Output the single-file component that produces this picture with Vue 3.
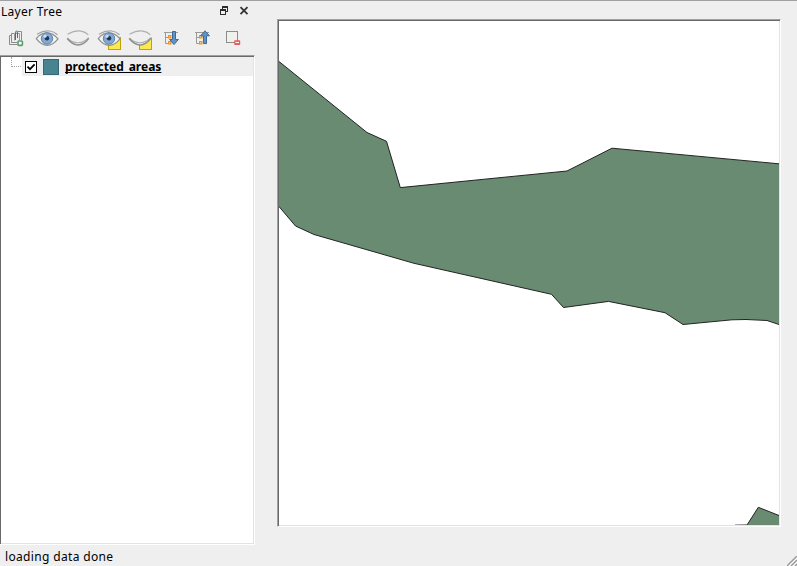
<script setup>
import { ref } from 'vue'

const tools = ['add-group', 'eye', 'closed', 'eye-note', 'closed-note', 'expand', 'collapse', 'remove']
const layers = ref([{ name: 'protected_areas', visible: true }])
const status = ref('loading data done')
</script>

<template>
  <div class="window">
    <main class="body">
      <section class="dock">
        <header class="dock-title">
          <span class="title">Layer Tree</span>
          <svg class="title-icon" width="10" height="10" viewBox="0 0 10 10" shape-rendering="crispEdges">
            <path d="M3 0H9V6H7V5H8V2H4V3H3Z M1 3H7V9H1Z M2 5V8H6V5Z" fill="#2c2c2c" fill-rule="evenodd" />
          </svg>
          <svg class="title-icon" width="10" height="10" viewBox="0 0 10 10">
            <path d="M1.5 1.2L8.5 8.2M8.5 1.2L1.5 8.2" stroke="#333" stroke-width="1.8" />
          </svg>
        </header>

        <div class="toolbar">
          <svg v-for="tool in tools" :key="tool" width="24" height="24" viewBox="0 0 24 24" fill="none">
            <g v-if="tool === 'add-group'">
              <path d="M8 9.5H5.5V18.5H13M10 7.5H7.5V16.5H13M13.5 5.5H17.5V14" stroke="#8a8c89" />
              <path d="M10.5 14.5V7.5H15.5V14" stroke="#9a9c99" />
              <path d="M11.5 14V7Q12.5 2.5 13.5 7V12" stroke="#4b6e80" />
              <rect x="14" y="15" width="4.4" height="4.4" rx=".8" fill="#fff" stroke="#5b9a6c" stroke-width="1.6" />
            </g>

            <g v-else-if="tool.startsWith('eye')">
              <rect v-if="tool === 'eye-note'" x="11.5" y="11.5" width="12" height="12" fill="#fce94f" stroke="#c4a000" />
              <path d="M1.3 12.6Q5.5 6.8 12 6.8Q18 6.8 23 12.8Q18 19.2 12.3 19.3Q6 19 1.3 12.6Z" fill="#f4f4f1" stroke="#8f9290" stroke-width="1.3" />
              <path d="M2 8.3Q8.5 4.4 14.5 5Q19 5.4 22.5 8.8" stroke="#a3a5a4" stroke-width="1.2" />
              <circle cx="12" cy="12.5" r="5.7" fill="#84a8d4" stroke="#5b80b0" />
              <circle cx="12" cy="12.2" r="2.2" fill="#22334a" />
              <circle cx="10" cy="10.2" r="1.6" fill="#c9dcf2" />
            </g>

            <g v-else-if="tool.startsWith('closed')">
              <template v-if="tool === 'closed-note'">
                <rect x="11.5" y="11.5" width="12" height="12" fill="#fce94f" stroke="#c4a000" />
                <path d="M10.5 10.5H24V11.5H23L19 17L12 19H10.5Z" fill="#efefef" />
              </template>
              <path d="M1.5 8.2Q9 4.2 15 5.1Q19.5 5.7 22.3 8.8" stroke="#adafae" stroke-width="1.2" />
              <path d="M1.3 12Q6 16.6 12 16.8Q18.5 16.6 22.7 11.7" stroke="#b0b2b1" stroke-width="1.1" />
              <path d="M1.3 12.5Q6.5 18.9 12 19Q18 18.8 22.7 12.4" stroke="#8f9190" stroke-width="1.6" />
            </g>

            <g v-else-if="tool === 'expand' || tool === 'collapse'">
              <path d="M5 6.5H19M6.5 7V17.5H9M7 11.5H9" stroke="#999b98" />
              <rect x="9.6" y="9.6" width="2.3" height="2.3" fill="#ffe6bd" stroke="#f5901c" stroke-width="1.2" />
              <rect x="9.6" y="15.6" width="2.3" height="2.3" fill="#ffe6bd" stroke="#f5901c" stroke-width="1.2" />
              <path v-if="tool === 'expand'" d="M13.5 5.5H16.5V13.5H19.4L15 18.6L10.6 13.5H13.5Z" fill="#6093c8" stroke="#3f6a98" stroke-width="1" />
              <path v-else d="M13.5 17.6H16.5V9.8H19.4L15 4.8L10.6 9.8H13.5Z" fill="#6093c8" stroke="#3f6a98" stroke-width="1" />
            </g>

            <g v-else>
              <rect x="5.5" y="5.5" width="11" height="11" fill="#f0f0ed" stroke="#8b8d8a" />
              <rect x="13.2" y="14.3" width="6" height="4.7" rx=".8" fill="#ef5656" />
              <path d="M14.5 16.5H18" stroke="#fff" stroke-width="1.2" />
            </g>
          </svg>
        </div>

        <div class="tree">
          <div v-for="layer in layers" :key="layer.name" class="layer">
            <span class="branch"></span>
            <div class="layer-item">
              <span class="check">
                <svg v-if="layer.visible" width="10" height="10" viewBox="0 0 10 10">
                  <path d="M1.5 4.6L4 7.2L8.6 2.4" fill="none" stroke="#000" stroke-width="1.7" />
                </svg>
              </span>
              <span class="swatch"></span>
              <span class="name">{{ layer.name }}</span>
            </div>
          </div>
        </div>
      </section>

      <section class="map">
        <svg width="500" height="504" viewBox="279 21 500 504">
          <g fill="#688b71" stroke="#232323" stroke-width="1">
            <path d="M270 54L279 61.5L367 132.5L386.5 141.3L400.3 187.6L567 171L612 148.2L779 163.8L790 165V328L779 324.5L767 320.5L746 319.5L732 319.8L683 324.5L665 312.7L608.5 301.4L563.5 307.5L551.5 294.3L414 263.3L314 234.5L295.5 226L279 206.5L270 196Z" />
            <path d="M747 525L758.3 507.3L779 515.5L790 520V535H740Z" />
            <path d="M735 524.9L747 524.5" stroke="#8a8a8a" />
          </g>
        </svg>
      </section>
    </main>

    <footer class="status">
      <span class="message">{{ status }}</span>
      <svg class="grip" width="10" height="10" viewBox="0 0 10 10">
        <path d="M0 10L10 0M4 10L10 4M8 10L10 8" stroke="#999" stroke-width="1.4" />
        <path d="M2 10L10 2M6 10L10 6" stroke="#fff" stroke-width="1" />
      </svg>
    </footer>
  </div>
</template>

<style>
body {
  margin: 0;
  background: #efefef;
}
</style>

<style scoped>
.window {
  box-sizing: border-box;
  width: 797px;
  height: 566px;
  display: flex;
  flex-direction: column;
  overflow: hidden;
  border-top: 1px solid #a0a0a0;
  background: #efefef;
  color: #000;
  font: 12px/16px "Noto Sans", "Open Sans", sans-serif;
}
.body {
  display: flex;
  height: 544px;
  gap: 22px;
}
.dock {
  display: flex;
  flex-direction: column;
  width: 255px;
}
.dock-title {
  display: flex;
  align-items: center;
  height: 20px;
  padding: 1px 6px 0 1px;
  box-sizing: border-box;
  gap: 10px;
}
.title {
  flex: 1;
  letter-spacing: 0.3px;
}
.title-icon {
  margin-bottom: 1px;
}
.toolbar {
  display: flex;
  gap: 7px;
  height: 29px;
  padding: 5px 0 0 4px;
}
.tree {
  flex: 1;
  box-sizing: border-box;
  border: solid;
  border-width: 1px 1px 1px 0;
  border-color: #a0a0a0 #fff #fff;
  box-shadow: inset 1px 1px #696969, inset -1px -1px #e3e3e3;
  background: #fff;
  padding: 1px 1px 1px 1px;
}
.layer {
  display: flex;
  height: 19px;
}
.branch {
  width: 9px;
  height: 9px;
  margin: 0 1px 0 10px;
  border-left: 1px dotted #a0a0a0;
  border-bottom: 1px dotted #a0a0a0;
}
.layer-item {
  flex: 1;
  display: flex;
  align-items: center;
  background: #efefef;
  padding-left: 3px;
}
.check {
  box-sizing: border-box;
  display: grid;
  place-items: center;
  width: 12px;
  height: 12px;
  border: 1px solid #000;
  background: #fff;
}
.swatch {
  box-sizing: border-box;
  width: 16px;
  height: 16px;
  margin: 0 6px 0 6px;
  border: 1px solid #35697a;
  background: #488391;
}
.name {
  font-weight: 700;
  text-decoration: underline;
  text-decoration-skip-ink: none;
}
.map {
  box-sizing: border-box;
  width: 504px;
  height: 508px;
  margin-top: 18px;
  border: 1px solid;
  border-color: #a0a0a0 #fff #fff #a0a0a0;
  box-shadow: inset 1px 1px #696969, inset -1px -1px #e3e3e3;
  padding: 1px;
  background: #fff;
}
.map svg {
  display: block;
}
.status {
  flex: 1;
  display: flex;
  justify-content: space-between;
  align-items: flex-end;
  padding-left: 5px;
}
.message {
  margin-bottom: 1px;
  letter-spacing: 0.34px;
}
</style>
